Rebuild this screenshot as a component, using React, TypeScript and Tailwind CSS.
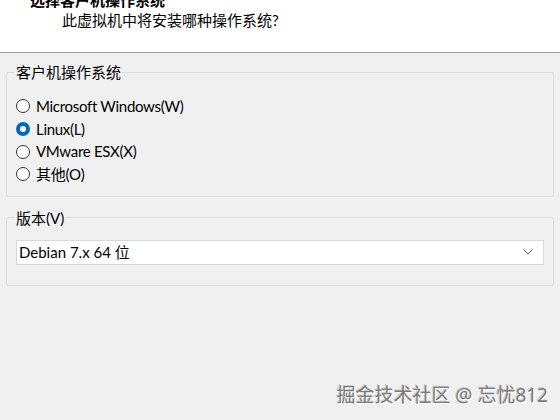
const font = { fontFamily: '"Segoe UI", "Noto Sans", "Noto Sans CJK SC", sans-serif' };

const options = [
  { label: "Microsoft Windows(W)", checked: false },
  { label: "Linux(L)", checked: true },
  { label: "VMware ESX(X)", checked: false },
  { label: "其他(O)", checked: false },
];

const Radio = ({ checked }: { checked: boolean }) =>
  checked ? (
    <span className="flex h-[14px] w-[14px] items-center justify-center rounded-full bg-[#0067c0]">
      <span className="h-[6px] w-[6px] rounded-full bg-white" />
    </span>
  ) : (
    <span className="h-[14px] w-[14px] rounded-full border border-[#333] bg-white" />
  );

export default function App() {
  return (
    <div className="relative h-[420px] w-[560px] overflow-hidden bg-[#f0f0f0] font-['Lato','Noto_Sans_CJK_SC',sans-serif] text-[15px] text-black">
      {/* 头部 */}
      <div className="flow-root h-[53px] border-b border-[#a0a0a0] bg-white">
        <div className="-mt-[10px] pl-[30px] text-[15px] font-bold leading-[20px]">选择客户机操作系统</div>
        <div className="pl-[62px] leading-[20px]">此虚拟机中将安装哪种操作系统?</div>
      </div>

      {/* 客户机操作系统 */}
      <fieldset className="mx-[6px] mt-[9px] rounded-[2px] border border-[#dcdcdc] pb-[10px] pl-[8px] pr-[8px]">
        <legend className="px-[1px] leading-[20px]">客户机操作系统</legend>
        <div className="ml-[1px] pt-[13px] tracking-[-0.3px]">
          {options.map((o) => (
            <label key={o.label} className="flex h-[22.7px] items-center gap-[6px]">
              <Radio checked={o.checked} />
              <span>{o.label}</span>
            </label>
          ))}
        </div>
      </fieldset>

      {/* 版本 */}
      <fieldset className="mx-[6px] mt-[11px] rounded-[2px] border border-[#dcdcdc] pb-[20px] pl-[8px] pr-[9px]">
        <legend className="px-[1px] leading-[20px]">版本(V)</legend>
        <div className="ml-[1px] mt-[12px] flex h-[25px] items-center justify-between border border-[#d9d9d9] bg-white pl-[2px] pr-[10px]">
          <span>Debian 7.x 64 位</span>
          <svg width="10" height="6" viewBox="0 0 10 6" fill="none">
            <path d="M0.5 0.5L5 5L9.5 0.5" stroke="#555" strokeWidth="1" />
          </svg>
        </div>
      </fieldset>

      {/* 水印 */}
      <div
        className="absolute right-[12px] top-[383px] text-[19px] leading-[24px] text-[#7a7a7a] [text-shadow:1px_1px_0_#fff,-1px_-1px_0_#ccc]"
        style={font}
      >
        掘金技术社区 @ 忘忧812
      </div>
    </div>
  );
}
